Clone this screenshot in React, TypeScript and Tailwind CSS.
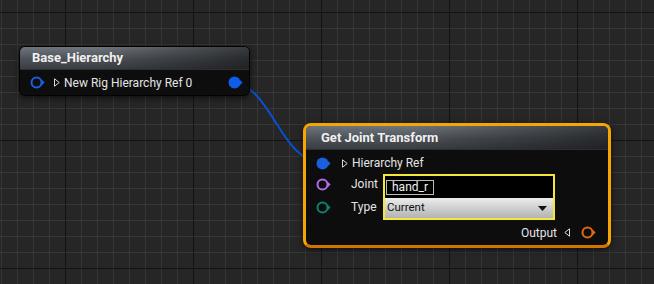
import React from 'react';

// UE style blueprint graph: grid canvas, two nodes, one wire.

type PinProps = { color: string; filled?: boolean };

function Pin({ color, filled }: PinProps) {
  return (
    <svg width="15" height="13" viewBox="0 0 15 13" className="shrink-0">
      <circle cx="6.5" cy="6.5" r={filled ? 6 : 5} fill={filled ? color : 'none'} stroke={color} strokeWidth={filled ? 0 : 2} />
      <path d="M12 4 L14.6 6.5 L12 9 Z" fill={color} />
    </svg>
  );
}

function Tri({ dir = 'right' }: { dir?: 'right' | 'left' }) {
  return (
    <svg width="6" height="9" viewBox="0 0 6 9" className="shrink-0">
      <path d={dir === 'right' ? 'M0.5 0.8 L5.2 4.5 L0.5 8.2 Z' : 'M5.5 0.8 L0.8 4.5 L5.5 8.2 Z'} fill="none" stroke="#d8d8d8" strokeWidth="1" />
    </svg>
  );
}

const header =
  'relative flex items-center rounded-t-[5px] border-b border-black/60 bg-[linear-gradient(to_bottom,#6f757d,#4c5157_55%,#3a3d42)] font-bold text-[#f0f0f0] text-[13px] after:absolute after:inset-0 after:rounded-t-[5px] after:bg-[linear-gradient(to_right,transparent_35%,rgba(10,10,10,0.55))] after:content-[""]';

export default function App() {
  return (
    <div className="relative h-[284px] w-[654px] overflow-hidden bg-[#262626] bg-[linear-gradient(to_right,#131313_1px,transparent_1px),linear-gradient(to_bottom,#131313_1px,transparent_1px),linear-gradient(to_right,#363636_1px,transparent_1px),linear-gradient(to_bottom,#363636_1px,transparent_1px)] bg-[size:128px_128px,128px_128px,16px_16px,16px_16px] bg-[position:65px_12px,65px_12px,1px_12px,1px_12px] font-['Roboto','Liberation_Sans',sans-serif]">
      <svg className="absolute inset-0" width="654" height="284">
        <path d="M229 82 C 272 82, 279 162, 322 162" fill="none" stroke="#0a4fd0" strokeWidth="2" />
      </svg>

      {/* Base_Hierarchy */}
      <div className="absolute left-[19px] top-[46px] w-[231px] rounded-[6px] border border-black/80 bg-[#0b0b0b]/90 shadow-[0_2px_6px_rgba(0,0,0,0.6)]">
        <div className={`${header} h-[23px] pl-[12px]`}>
          <span className="relative z-10">Base_Hierarchy</span>
        </div>
        <div className="flex h-[25px] items-center pl-[10px] pr-[6px] text-[12px] text-[#e4e4e4]">
          <Pin color="#1a5fe0" />
          <div className="ml-[9px]">
            <Tri />
          </div>
          <span className="ml-[4px]">New Rig Hierarchy Ref 0</span>
          <div className="ml-auto">
            <Pin color="#0f5ce8" filled />
          </div>
        </div>
      </div>

      {/* Get Joint Transform (selected) */}
      <div className="absolute left-[303px] top-[123px] w-[308px] rounded-[8px] border-[3px] border-[#f5a600] border-b-[#d27400] bg-[#0b0b0b]/90 shadow-[0_2px_6px_rgba(0,0,0,0.6)]">
        <div className={`${header} h-[24px] pl-[15px]`}>
          <span className="relative z-10">Get Joint Transform</span>
        </div>
        <div className="text-[12px] text-[#e4e4e4]">
          <div className="mt-[3px] flex h-[20px] items-center pl-[10px]">
            <Pin color="#1a5fe0" filled />
            <div className="ml-[11px]">
              <Tri />
            </div>
            <span className="ml-[4px]">Hierarchy Ref</span>
          </div>
          <div className="mt-[1px] flex pl-[10px]">
            <div className="flex w-[67px] flex-col">
              <div className="flex h-[20px] items-center">
                <Pin color="#b56be8" />
                <span className="ml-[20px]">Joint</span>
              </div>
              <div className="flex h-[26px] items-center">
                <Pin color="#0f8070" />
                <span className="ml-[20px]">Type</span>
              </div>
            </div>
            <div className="flex h-[46px] w-[172px] flex-col border-2 border-[#f4e73a] bg-black">
              <div className="flex h-[22px] items-center pl-[1px]">
                <span className="flex h-[15px] items-center border border-[#bdbdbd] px-[5px] leading-none text-[#f2f2f2]">hand_r</span>
              </div>
              <div className="flex flex-1 items-center justify-between bg-[linear-gradient(to_bottom,#ececec,#cfcfcf_50%,#b3b3b3)] pl-[2px] pr-[6px] text-[11.5px] text-[#111]">
                <span>Current</span>
                <svg width="9" height="5" viewBox="0 0 9 5">
                  <path d="M0 0 L9 0 L4.5 5 Z" fill="#111" />
                </svg>
              </div>
            </div>
          </div>
          <div className="mt-[4px] flex h-[18px] items-center justify-end pb-[1px] pr-[12px]">
            <span>Output</span>
            <div className="ml-[7px]">
              <Tri dir="left" />
            </div>
            <div className="ml-[11px]">
              <Pin color="#e06a10" />
            </div>
          </div>
          <div className="h-[3px]" />
        </div>
      </div>
    </div>
  );
}
